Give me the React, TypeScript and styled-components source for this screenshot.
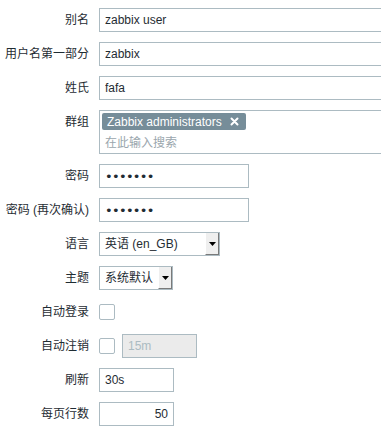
import React from 'react'
import styled, { createGlobalStyle } from 'styled-components'

const GlobalStyle = createGlobalStyle`
  html, body {
    margin: 0;
    padding: 0;
    overflow: hidden;
    background: #fff;
  }
  body {
    font-family: 'Liberation Sans', Arial, 'Noto Sans CJK SC', sans-serif;
    font-size: 12px;
    color: #1f2c33;
  }
`

const Form = styled.form`
  display: flex;
  flex-direction: column;
  gap: 10px;
  padding-top: 8px;
  width: 381px;
  overflow: hidden;
`

const Row = styled.div`
  display: grid;
  grid-template-columns: 89px minmax(0, 1fr);
  column-gap: 10px;
  align-items: start;
`

const Label = styled.label`
  text-align: right;
  line-height: 24px;
  white-space: nowrap;
`

const Field = styled.div`
  display: flex;
  align-items: center;
  gap: 7px;
  min-height: 24px;
`

interface InputProps {
  $width: number
  $right?: boolean
}

const TextInput = styled.input<InputProps>`
  box-sizing: border-box;
  flex: none;
  width: ${({ $width }) => $width}px;
  height: 24px;
  margin: 0;
  padding: 0 5px;
  border: 1px solid #acbbc2;
  border-radius: 0;
  background: #fff;
  font-family: inherit;
  font-size: 12px;
  color: #1f2c33;
  text-align: ${({ $right }) => ($right ? 'right' : 'left')};
  outline: none;

  &:disabled {
    background: #ebebeb;
    color: #acbbc2;
  }
`

const PasswordInput = styled(TextInput)`
  font-family: 'DejaVu Sans', sans-serif;
  font-size: 13px;
  letter-spacing: -0.7px;
`

const MultiSelect = styled.div`
  box-sizing: border-box;
  flex: none;
  width: 453px;
  height: 44px;
  border: 1px solid #acbbc2;
  padding: 2px 1px 0 2px;
  display: flex;
  flex-direction: column;
  align-items: flex-start;
`

const Tag = styled.span`
  display: inline-flex;
  align-items: center;
  gap: 8px;
  height: 17px;
  padding: 0 7px 0 5px;
  border-radius: 2px;
  background: #768d99;
  color: #fff;
  font-size: 12px;
`

const Placeholder = styled.span`
  padding: 3px 0 0 3px;
  color: #9aa6ad;
  font-size: 12px;
`

const Select = styled.div<{ $width: number }>`
  box-sizing: border-box;
  width: ${({ $width }) => $width}px;
  height: 24px;
  border: 1px solid #acbbc2;
  display: flex;
  align-items: stretch;
  justify-content: space-between;
  padding: 0 0 0 5px;
  background: #fff;
`

const SelectText = styled.span`
  line-height: 22px;
  white-space: nowrap;
`

const ArrowButton = styled.span`
  width: 14px;
  box-sizing: border-box;
  background: #efefef;
  border-left: 1px solid #fff;
  border-right: 1px solid #7a7a7a;
  border-bottom: 1px solid #7a7a7a;
  display: flex;
  align-items: center;
  justify-content: center;
`

const Checkbox = styled.span`
  box-sizing: border-box;
  flex: none;
  width: 16px;
  height: 16px;
  border: 1px solid #acbbc2;
  border-radius: 2px;
  background: #fff;
`

const CloseIcon = () => (
  <svg width="9" height="9" viewBox="0 0 9 9">
    <path d="M1.5 1.5 L7.5 7.5 M7.5 1.5 L1.5 7.5" stroke="#fff" strokeWidth="2" strokeLinecap="round" />
  </svg>
)

const Arrow = () => (
  <svg width="7" height="4" viewBox="0 0 7 4">
    <path d="M0 0 H7 L3.5 4 Z" fill="#000" />
  </svg>
)

const App = () => {
  return (
    <>
      <GlobalStyle />
      <Form>
        <Row>
          <Label>别名</Label>
          <Field>
            <TextInput $width={453} defaultValue="zabbix user" />
          </Field>
        </Row>
        <Row>
          <Label>用户名第一部分</Label>
          <Field>
            <TextInput $width={453} defaultValue="zabbix" />
          </Field>
        </Row>
        <Row>
          <Label>姓氏</Label>
          <Field>
            <TextInput $width={453} defaultValue="fafa" />
          </Field>
        </Row>
        <Row>
          <Label>群组</Label>
          <Field>
            <MultiSelect>
              <Tag>
                Zabbix administrators
                <CloseIcon />
              </Tag>
              <Placeholder>在此输入搜索</Placeholder>
            </MultiSelect>
          </Field>
        </Row>
        <Row>
          <Label>密码</Label>
          <Field>
            <PasswordInput $width={150} type="password" defaultValue="1234567" />
          </Field>
        </Row>
        <Row>
          <Label>密码 (再次确认)</Label>
          <Field>
            <PasswordInput $width={150} type="password" defaultValue="1234567" />
          </Field>
        </Row>
        <Row>
          <Label>语言</Label>
          <Field>
            <Select $width={121}>
              <SelectText>英语 (en_GB)</SelectText>
              <ArrowButton>
                <Arrow />
              </ArrowButton>
            </Select>
          </Field>
        </Row>
        <Row>
          <Label>主题</Label>
          <Field>
            <Select $width={74}>
              <SelectText>系统默认</SelectText>
              <ArrowButton>
                <Arrow />
              </ArrowButton>
            </Select>
          </Field>
        </Row>
        <Row>
          <Label>自动登录</Label>
          <Field>
            <Checkbox />
          </Field>
        </Row>
        <Row>
          <Label>自动注销</Label>
          <Field>
            <Checkbox />
            <TextInput $width={75} defaultValue="15m" disabled />
          </Field>
        </Row>
        <Row>
          <Label>刷新</Label>
          <Field>
            <TextInput $width={75} defaultValue="30s" />
          </Field>
        </Row>
        <Row>
          <Label>每页行数</Label>
          <Field>
            <TextInput $width={75} $right defaultValue="50" />
          </Field>
        </Row>
      </Form>
    </>
  )
}

export default App
